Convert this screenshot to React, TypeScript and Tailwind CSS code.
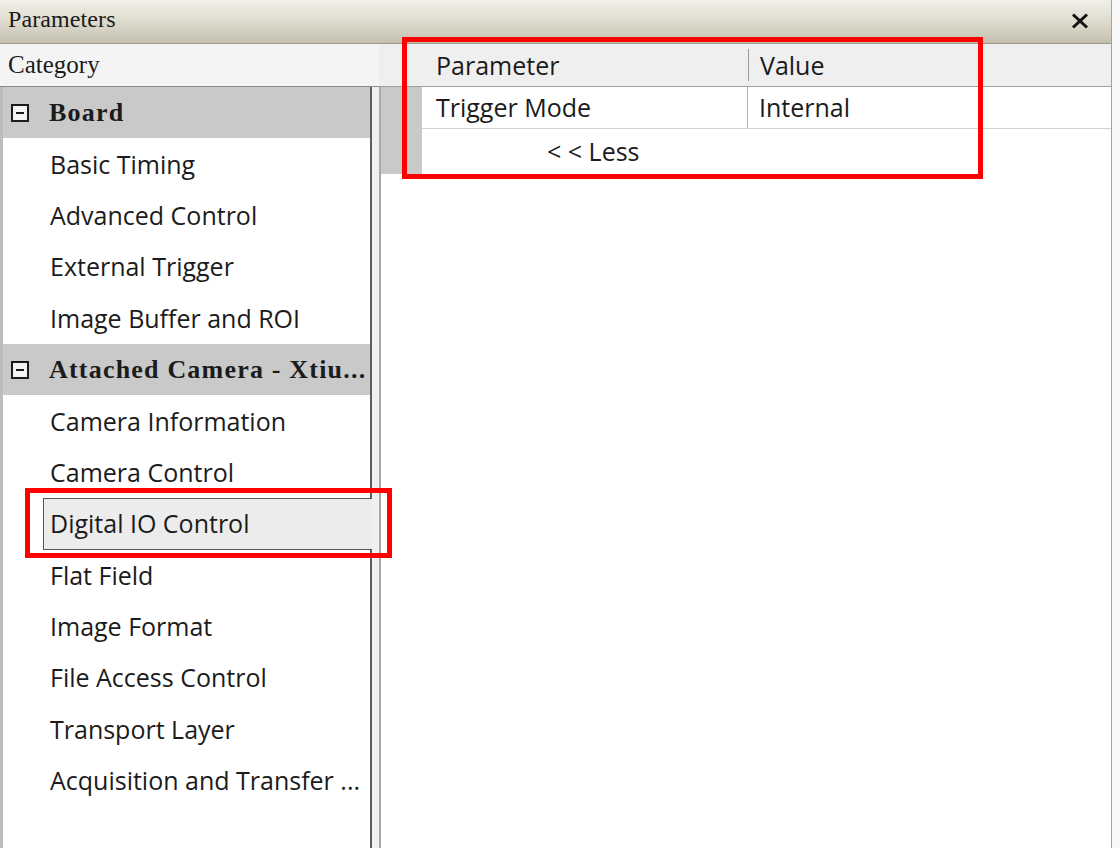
import React from "react";

type Row = { label: string; header?: boolean; selected?: boolean };

const rows: Row[] = [
  { label: "Board", header: true },
  { label: "Basic Timing" },
  { label: "Advanced Control" },
  { label: "External Trigger" },
  { label: "Image Buffer and ROI" },
  { label: "Attached Camera - Xtiu...", header: true },
  { label: "Camera Information" },
  { label: "Camera Control" },
  { label: "Digital IO Control", selected: true },
  { label: "Flat Field" },
  { label: "Image Format" },
  { label: "File Access Control" },
  { label: "Transport Layer" },
  { label: "Acquisition and Transfer ..." },
];

const serif = "font-['Liberation_Serif',serif]";
const sans = "font-['Open_Sans',sans-serif]";

function MinusBox() {
  return (
    <svg width="18" height="18" viewBox="0 0 18 18" className="shrink-0">
      <rect x="1" y="1" width="16" height="16" fill="#f4f4f4" stroke="#1a1a1a" strokeWidth="2" />
      <line x1="5" y1="9" x2="13" y2="9" stroke="#1a1a1a" strokeWidth="2" />
    </svg>
  );
}

export default function App() {
  return (
    <div className="relative w-[1120px] h-[848px] overflow-hidden bg-[#f7f7f7] text-[#1b1b1b]">
      <div className="w-[1112px] h-full flex flex-col border-r border-[#a3a3a3] bg-[#f0f0f0]">
        {/* Title bar */}
        <div className="h-[44px] shrink-0 flex items-start justify-between bg-[linear-gradient(to_bottom,#f1efe7,#dcd9cc_55%,#c4c0b0)] border-b border-[#9d998b]">
          <span className={`${serif} text-[24px] leading-none pl-[8px] pt-[7px] tracking-[0.1px]`}>Parameters</span>
          <svg width="18" height="16" viewBox="0 0 18 16" className="mt-[13px] mr-[22px]">
            <line x1="2" y1="1.5" x2="16" y2="14.5" stroke="#111" strokeWidth="3" />
            <line x1="16" y1="1.5" x2="2" y2="14.5" stroke="#111" strokeWidth="3" />
          </svg>
        </div>

        <div className="flex flex-1 min-h-0">
          {/* Left column */}
          <div className="w-[379px] shrink-0 flex flex-col">
            <div className="h-[43px] shrink-0 flex items-center bg-[#f4f4f4] border-b border-[#8a8a8a]">
              <span className={`${serif} text-[25px] leading-none pl-[8px] pb-[2px]`}>Category</span>
            </div>
            <div className="flex flex-1 min-h-0">
              <div className="w-[372px] shrink-0 flex flex-col bg-white border-l-[3px] border-l-[#bdbdbd]">
                {rows.map((r) =>
                  r.header ? (
                    <div
                      key={r.label}
                      className="h-[51.4px] shrink-0 flex items-center gap-[20px] pl-[8px] bg-[#c9c9c9] border-r-2 border-[#5e5e5e]"
                    >
                      <MinusBox />
                      <span className={`${serif} font-bold text-[26px] leading-none whitespace-nowrap tracking-[1.2px]`}>
                        {r.label}
                      </span>
                    </div>
                  ) : r.selected ? (
                    <div key={r.label} className="h-[51.4px] shrink-0 flex pl-[40px]">
                      <div className="flex-1 flex items-center bg-[#ececec] border-y border-l border-[#555555] pl-[6px]">
                        <span className={`${sans} text-[25px] leading-none whitespace-nowrap`}>{r.label}</span>
                      </div>
                    </div>
                  ) : (
                    <div
                      key={r.label}
                      className="h-[51.4px] shrink-0 flex items-center pl-[47px] border-r-2 border-[#5e5e5e]"
                    >
                      <span className={`${sans} text-[25px] leading-none whitespace-nowrap`}>{r.label}</span>
                    </div>
                  )
                )}
                <div className="flex-1 border-r-2 border-[#5e5e5e]" />
              </div>
              <div className="flex-1 bg-[#f0f0f0]" />
            </div>
          </div>

          {/* Right column */}
          <div className="flex-1 flex flex-col min-w-0">
            <div className="h-[43px] shrink-0 flex items-center bg-[#efefef] border-b border-[#a0a0a0]">
              <div className="w-[369px] shrink-0 flex items-center pl-[57px]">
                <span className={`${sans} text-[25px] leading-none`}>Parameter</span>
              </div>
              <div className="w-px h-[32px] bg-[#9c9c9c]" />
              <span className={`${sans} text-[25px] leading-none pl-[11px]`}>Value</span>
            </div>
            <div className="flex-1 flex flex-col bg-white border-l-2 border-[#a9a9a9]">
              <div className="h-[42px] shrink-0 flex">
                <div className="w-[41px] shrink-0 bg-[#c9c9c9]" />
                <div className="flex-1 flex border-b border-[#d2d2d2]">
                  <div className="w-[326px] shrink-0 flex items-center pl-[14px] border-r border-[#b0b0b0]">
                    <span className={`${sans} text-[25px] leading-none`}>Trigger Mode</span>
                  </div>
                  <div className="flex items-center pl-[11px]">
                    <span className={`${sans} text-[25px] leading-none`}>Internal</span>
                  </div>
                </div>
              </div>
              <div className="h-[45px] shrink-0 flex">
                <div className="w-[41px] shrink-0 bg-[#c9c9c9]" />
                <div className="flex-1 flex items-center pl-[125px]">
                  <span className={`${sans} text-[25px] leading-none`}>&lt; &lt; Less</span>
                </div>
              </div>
              <div className="flex-1" />
            </div>
          </div>
        </div>
      </div>

      {/* Red annotation boxes */}
      <div className="absolute left-[402px] top-[37px] w-[581px] h-[142px] border-[5px] border-[#ff0000]" />
      <div className="absolute left-[25px] top-[488px] w-[367px] h-[70px] border-[5px] border-[#ff0000]" />
    </div>
  );
}
